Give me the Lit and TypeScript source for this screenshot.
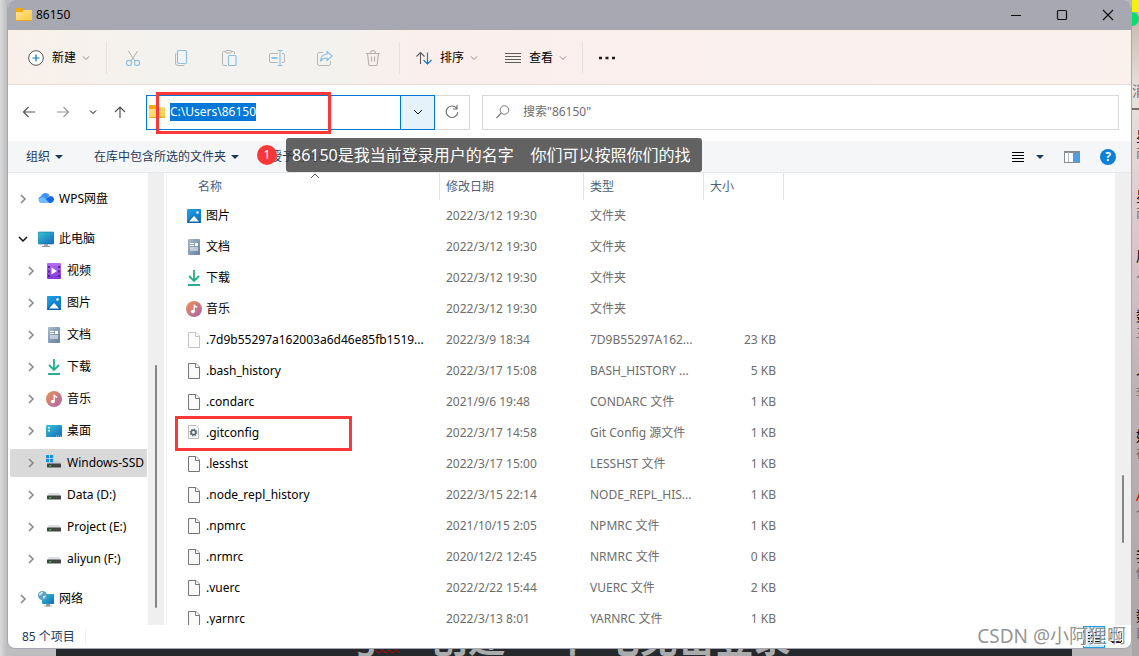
import { LitElement, html, css, svg, nothing } from "lit";
import { customElement, query } from "lit/decorators.js";
import { classMap } from "lit/directives/class-map.js";

type Row = [icon: string, name: string, date: string, type: string, size: string];

const ROWS: Row[] = [
  ["picture", "图片", "2022/3/12 19:30", "文件夹", ""],
  ["doc", "文档", "2022/3/12 19:30", "文件夹", ""],
  ["download", "下载", "2022/3/12 19:30", "文件夹", ""],
  ["music", "音乐", "2022/3/12 19:30", "文件夹", ""],
  ["fileDim", ".7d9b55297a162003a6d46e85fb1519...", "2022/3/9 18:34", "7D9B55297A162...", "23 KB"],
  ["file", ".bash_history", "2022/3/17 15:08", "BASH_HISTORY ...", "5 KB"],
  ["file", ".condarc", "2021/9/6 19:48", "CONDARC 文件", "1 KB"],
  ["config", ".gitconfig", "2022/3/17 14:58", "Git Config 源文件", "1 KB"],
  ["file", ".lesshst", "2022/3/17 15:00", "LESSHST 文件", "1 KB"],
  ["file", ".node_repl_history", "2022/3/15 22:14", "NODE_REPL_HIS...", "1 KB"],
  ["file", ".npmrc", "2021/10/15 2:05", "NPMRC 文件", "1 KB"],
  ["file", ".nrmrc", "2020/12/2 12:45", "NRMRC 文件", "0 KB"],
  ["file", ".vuerc", "2022/2/22 15:44", "VUERC 文件", "2 KB"],
  ["file", ".yarnrc", "2022/3/13 8:01", "YARNRC 文件", "1 KB"],
];

type Node = { icon: string; label: string; child?: boolean; open?: boolean; current?: boolean };

const TREE: Node[][] = [
  [{ icon: "cloud", label: "WPS网盘" }],
  [
    { icon: "pc", label: "此电脑", open: true },
    { icon: "video", label: "视频", child: true },
    { icon: "picture", label: "图片", child: true },
    { icon: "doc", label: "文档", child: true },
    { icon: "download", label: "下载", child: true },
    { icon: "music", label: "音乐", child: true },
    { icon: "desktop", label: "桌面", child: true },
    { icon: "winDrive", label: "Windows-SSD", child: true, current: true },
    { icon: "drive", label: "Data (D:)", child: true },
    { icon: "drive", label: "Project (E:)", child: true },
    { icon: "drive", label: "aliyun (F:)", child: true },
  ],
  [{ icon: "network", label: "网络" }],
];

const CHATS = [
  { name: "星", text: "南" },
  { name: "星", text: "南" },
  { name: "周", text: "人" },
  { name: "数", text: "三" },
  { name: "个", text: "李" },
  { name: "好", text: "在" },
  { name: "A", text: "个", hot: true },
  { name: "我", text: "你" },
  { name: "数", text: "口" },
];

const ART: Record<string, unknown> = {
  folder: svg`<path d="M0 2q0-1 1-1h5l2 2v4H0z" fill="#f2a900"/><path d="M0 13V5h6.500L8 3h7q1 0 1 1v9q0 1-1 1H1q-1 0-1-1z" fill="url(#gf)"/><path d="M0 13q0 1 1 1h14q1 0 1-1z" fill="#eaa620"/>`,
  picture: svg`<rect x="1" y="1" width="14" height="14" rx="1" fill="url(#gb)"/><path d="M1 14l5.500-6q.8-.8 1.600 0L15 14q0 1-1 1H2q-1 0-1-1z" fill="#0866ae"/><path d="M3 13.500l4.400-5q.6-.6 1.200 0l4.400 5z" fill="#fff"/><circle cx="11.500" cy="4.500" r="1.300" fill="#fff"/>`,
  doc: svg`<rect x="2" y="0" width="12" height="16" rx="1" fill="url(#gd)"/><path d="M4 4.500h4M4 6.500h4M4 9h8M4 11h8" stroke="#fff" stroke-width="1.200"/><rect x="9" y="4" width="3" height="3" fill="#fff"/>`,
  download: svg`<path d="M8 0v11M3 6l5 5 5-5" fill="none" stroke="#1eb088" stroke-width="1.800"/><path d="M2 15h12" stroke="#12a48b" stroke-width="1.800"/>`,
  music: svg`<circle cx="8" cy="8" r="8" fill="url(#gm)"/><ellipse cx="6.800" cy="10.600" rx="2" ry="1.800" fill="#fff"/><path d="M8.200 10.500V3.500q.3 2 3 2.800" fill="none" stroke="#fff" stroke-width="1.300"/>`,
  file: svg`<path d="M2.500.5h7.500l3.500 3.500v11.500h-11z" fill="#fafafa" stroke="#767676"/><path d="M9.500.5v4h4" fill="#fff" stroke="#767676"/>`,
  fileDim: svg`<path d="M2.500.5h7.500l3.500 3.500v11.500h-11z" fill="#fdfdfd" stroke="#c2c2c2"/><path d="M9.500.5v4h4" fill="#fff" stroke="#c2c2c2"/>`,
  config: svg`<path d="M2.500.5h7.500l2.500 2.500v10.500h-10z" fill="#fafafa" stroke="#bcbcbc"/><circle cx="7.500" cy="7.500" r="2.200" fill="none" stroke="#53676e" stroke-width="1.600"/><circle cx="7.500" cy="7.500" r="3.300" fill="none" stroke="#53676e" stroke-width="1.200" stroke-dasharray="1.300 1.290"/>`,
  cloud: svg`<g transform="translate(0 -2)"><path d="M3.500 14a3.500 3.500 0 01-.5-6.800A4.800 4.800 0 0111.500 6l-5 8z" fill="#3a95ff"/><path d="M7 11l4-3.500a3.300 3.300 0 014.500 4.500q-.8 2-3 2H9z" fill="#1668e3"/><path d="M3 8.500q2.500-1 4 .8L11.500 14H3a2.800 2.800 0 010-5.500z" fill="#70bcff"/></g>`,
  pc: svg`<rect x="0" y="1" width="16" height="12" rx="1" fill="url(#gp)" stroke="#1c6f94" stroke-width=".6"/><path d="M6 13h4v2H6z" fill="#9aa6b0"/><path d="M4 15.500h8" stroke="#8a97a3"/>`,
  video: svg`<rect x="1" y="0" width="14" height="16" rx="1" fill="url(#gv)"/><path d="M3 3v11M13 3v11" stroke="#4b1d9a" stroke-width="1.800" stroke-dasharray="2 2.500"/><path d="M5.500 4.500L11 8l-5.500 3.500z" fill="#fff"/>`,
  desktop: svg`<rect x="0" y="2" width="16" height="12" rx="1" fill="url(#gp)"/><path d="M3 4v5" stroke="#fff" stroke-width="1.600" stroke-dasharray="1.600 1.200"/><path d="M10 13h5" stroke="#b9e5ff" stroke-dasharray="1 1"/>`,
  drive: svg`<path d="M3 6h10l2 3H1z" fill="#dcdfe1"/><rect x="1" y="8.500" width="14" height="4" rx=".6" fill="#434547"/><rect x="3.500" y="10" width="1.400" height="1.400" fill="#3fe04d"/>`,
  winDrive: svg`<path d="M6 6h8l1 3H2z" fill="#cdd0d2"/><rect x="1" y="8.500" width="14" height="4" rx=".6" fill="#434547"/><rect x="3.500" y="10" width="1.400" height="1.400" fill="#3fe04d"/><path d="M0 0h3.200v3.200H0zM4 0h3.200v3.200H4zM0 4h3.200v3.200H0zM4 4h3.200v3.200H4z" fill="#1593e6"/>`,
  network: svg`<rect x="4" y="3" width="12" height="10" rx=".8" fill="url(#gp)"/><path d="M8.500 13h3v2h-3zM6 15h8" fill="#8a97a3" stroke="#8a97a3" stroke-width=".8"/><circle cx="4.500" cy="4.500" r="4.500" fill="#5f9fc4"/><path d="M1 3q3-3 4-2 0 2-2 3t-2 0M5 5q3-1 3 0t-3 3z" fill="#c9e6f2"/>`,
  plus: svg`<circle cx="8" cy="8" r="7.300" fill="#fdfdfd" stroke="#545454"/><path d="M8 4.500v7M4.500 8h7" stroke="#0a78c8" stroke-width="1.200"/>`,
  cut: svg`<path d="M3.500 1l6.300 10M12.500 1L6.200 11" fill="none" stroke="#b4b0b0"/><circle cx="4" cy="13" r="2.600" fill="none" stroke="#8ec0e4" stroke-width="1.200"/><circle cx="12" cy="13" r="2.600" fill="none" stroke="#8ec0e4" stroke-width="1.200"/>`,
  copy: svg`<path d="M3.500 3Q2.500 3.500 2.500 5v8q0 2.500 2.500 2.500h5q1.500 0 2-1" fill="none" stroke="#b9b6b5"/><rect x="4.500" y=".5" width="9" height="13" rx="1.500" fill="#f1f5f6" stroke="#8ec0e4" stroke-width="1.200"/>`,
  paste: svg`<path d="M5 1.500H2.500q-1 0-1 1v12q0 1 1 1H6M10 1.500h2.500q1 0 1 1V4" fill="none" stroke="#b4b0b0"/><rect x="4.500" y=".5" width="6" height="2.500" rx="1.200" fill="none" stroke="#b4b0b0"/><rect x="7.500" y="5.500" width="7.500" height="10" rx="1" fill="#f3f5f5" stroke="#8ec0e4" stroke-width="1.200"/>`,
  rename: svg`<path d="M9 3.500H2q-1.500 0-1.500 1.500v6q0 1.500 1.500 1.500h7M13 3.500h1q1.500 0 1.500 1.500v6q0 1.500-1.500 1.500h-1" fill="none" stroke="#b9b6b5"/><path d="M2.500 8h6" stroke="#8ec0e4" stroke-width="2"/><path d="M8.500.5h5M8.500 15.500h5M11 .5v15" stroke="#8ec0e4" stroke-width="1.200"/>`,
  share: svg`<path d="M6 2.500H2.500Q.5 2.500.5 4.500v9q0 2 2 2h9q2 0 2-2V11" fill="none" stroke="#b9b6b5"/><path d="M10 1.500l5 4.500-5 4.500V8q-4 0-6.500 3 .5-6.500 6.500-7z" fill="none" stroke="#8ec0e4" stroke-width="1.200" stroke-linejoin="round"/>`,
  trash: svg`<path d="M1 3.500h14M5.500 3Q5.500.5 8 .5T10.500 3M2.500 3.500l1.300 11q.1 1 1.200 1h6q1.100 0 1.200-1l1.300-11M6.500 6.500v5M9.500 6.500v5" fill="none" stroke="#b4b0b0" stroke-width="1.100"/>`,
  sort: svg`<path d="M4.500 14V2.500M.5 6.500l4-4 4 4" fill="none" stroke="#5c5c5c" stroke-width="1.100"/><path d="M11.500 2.500v11.500M7.500 10l4 4 4-4" fill="none" stroke="#0a78d4" stroke-width="1.100"/>`,
  lines: svg`<path d="M0 3.500h16M0 6.500h16M0 9.500h16M0 12.500h16" stroke="#5c5c5c"/>`,
  dots: svg`<path d="M0 8h3M6.500 8h3M13 8h3" stroke="#1c1c1c" stroke-width="2.400"/>`,
  back: svg`<path d="M14 8H2.500M7.500 3L2.500 8l5 5" fill="none" stroke="#555" stroke-width="1.200"/>`,
  forward: svg`<path d="M2 8h11.500M8.500 3l5 5-5 5" fill="none" stroke="#959595" stroke-width="1.200"/>`,
  up: svg`<path d="M8 14V3M3 8l5-5 5 5" fill="none" stroke="#555" stroke-width="1.200"/>`,
  refresh: svg`<path d="M12.600 4.200A5.800 5.800 0 1013.800 8M13 1v4H9" fill="none" stroke="#6e6e6e" stroke-width="1.100"/>`,
  search: svg`<circle cx="9.500" cy="6" r="4.300" fill="none" stroke="#777"/><path d="M6.300 9L1.500 14" stroke="#777" stroke-width="1.100"/>`,
  list: svg`<path d="M2 3.500h12M2 6.500h12M2 9.500h12M2 12.500h12" stroke="#000"/>`,
  pane: svg`<rect x=".5" y="2.500" width="15" height="11" fill="#fff" stroke="#848b91"/><path d="M1 3h14" stroke="#848b91" stroke-width="2"/><path d="M4.500 3v10" stroke="#b7babd"/><rect x="9" y="4" width="6" height="9" fill="#4c9fe3"/>`,
  min: svg`<path d="M3 8.500h10" stroke="#111"/>`,
  max: svg`<rect x="3.500" y="3.500" width="9" height="9" rx="1" fill="none" stroke="#111" stroke-width="1.200"/>`,
  close: svg`<path d="M3 3l10 10M13 3L3 13" stroke="#111" stroke-width="1.200"/>`,
  details: svg`<path d="M2 3.500h2M5 3.500h9M2 6.500h2M5 6.500h9M2 9.500h2M5 9.500h9M2 12.500h2M5 12.500h9" stroke="#222"/>`,
  tiles: svg`<rect x="2.500" y="3.500" width="11" height="9" fill="none" stroke="#222"/><path d="M4 13.500h9" stroke="#222"/>`,
};

const icon = (name: string) => html`<svg class="icon" viewBox="0 0 16 16" width="16" height="16" aria-hidden="true">
  <defs>
    <linearGradient id="gf" x1="0" y1="0" x2="1" y2="1"><stop stop-color="#ffe394" /><stop offset="1" stop-color="#ffc83c" /></linearGradient>
    <linearGradient id="gb" x1="0" y1="0" x2="1" y2="1"><stop stop-color="#1ea0e6" /><stop offset="1" stop-color="#0a70c0" /></linearGradient>
    <linearGradient id="gd" x1="0" y1="0" x2="1" y2="1"><stop stop-color="#a9bbce" /><stop offset="1" stop-color="#64809f" /></linearGradient>
    <linearGradient id="gm" x1="0" y1="0" x2="1" y2="1"><stop stop-color="#f0934f" /><stop offset="1" stop-color="#a862b0" /></linearGradient>
    <linearGradient id="gp" x1="0" y1="0" x2="1" y2="1"><stop stop-color="#36c5d8" /><stop offset="1" stop-color="#1667b8" /></linearGradient>
    <linearGradient id="gv" x1="0" y1="0" x2="0" y2="1"><stop stop-color="#b66cf0" /><stop offset="1" stop-color="#7e38dc" /></linearGradient>
  </defs>
  ${ART[name]}
</svg>`;

const chevron = (dir: "down" | "right" | "up" | "wide") => {
  const d = { down: "M2 3.500l3 3 3-3", wide: "M1 3l4 4 4-4", right: "M3 1l4 4-4 4", up: "M1 7l4-4 4 4" }[dir];
  return html`<svg class="chev" viewBox="0 0 10 10" width="10" height="10" aria-hidden="true">
    <path d=${d} fill="none" stroke="currentColor" />
  </svg>`;
};

const caret = () => html`<svg width="8" height="4" viewBox="0 0 8 4" aria-hidden="true"><path d="M0 0h8L4 4z" fill="#1e395b" /></svg>`;

@customElement("app-root")
export class AppRoot extends LitElement {
  @query(".path") private path!: HTMLInputElement;

  static styles = css`
    :host {
      display: grid;
      grid-template-columns: 7px minmax(0, 1fr) 7px;
      grid-template-rows: minmax(0, 1fr) 7px;
      height: 100vh;
      overflow: hidden;
      font-family: "Noto Sans", "Noto Sans CJK SC", sans-serif;
      font-size: 12px;
      line-height: 16px;
      color: #000;
      background: linear-gradient(90deg, #dadada, #bdbdc0 7px, #b9b5b7);
    }
    * { box-sizing: border-box; }
    button {
      font: inherit;
      color: inherit;
      background: none;
      border: 0;
      padding: 0;
      display: flex;
      align-items: center;
      white-space: nowrap;
    }
    input {
      font: inherit;
      border: 0;
      padding: 0;
      outline: 0;
      min-width: 0;
      background: transparent;
    }
    .icon, .chev { flex: none; display: block; }
    .window {
      grid-column: 2;
      grid-row: 1;
      display: flex;
      flex-direction: column;
      min-height: 0;
      background: #fff;
      border: 1px solid #a7a7b1;
      border-top: 0;
      border-radius: 8px;
      overflow: hidden;
    }
    .title {
      flex: none;
      display: flex;
      align-items: center;
      height: 30px;
      padding-left: 8px;
      background: #a8a8b2;
    }
    .title h1 { flex: 1; margin: 0 0 0 4px; font-size: 12px; line-height: 16px; font-weight: 400; }
    .title button { width: 46px; height: 30px; justify-content: center; }
    .commands {
      flex: none;
      display: flex;
      align-items: center;
      height: 55px;
      padding: 2px 17px 0 20px;
      background: linear-gradient(90deg, #f9f0ea, #f4f2ee 12%, #f4f2ee 30%, #faefec 36%, #faf0ec);
      border-bottom: 1px solid #e8dcd8;
    }
    .labelled { gap: 8px; }
    .labelled .chev { margin-left: -3px; color: #8a8a8a; }
    .new { width: 78px; }
    .tool { width: 48px; justify-content: center; }
    .menu { width: 89px; }
    .rule { width: 1px; height: 32px; background: #e8e2df; }
    .tools { display: flex; padding: 0 2px; }
    .menus { display: flex; padding-left: 16px; width: 182px; }
    .more { padding-left: 16px; }
    .address {
      flex: none;
      display: flex;
      align-items: center;
      height: 56px;
      padding: 0 12px 2px 13px;
    }
    .nav { display: flex; align-items: center; width: 125px; }
    .nav button { width: 35px; }
    .nav .recent { width: 25px; }
    .box { display: flex; height: 35px; border: 1px solid #d9d9d9; }
    .location { position: relative; width: 324px; }
    .entry {
      display: flex;
      align-items: center;
      flex: 1;
      margin: -1px 0;
      margin-left: -1px;
      padding-left: 2px;
      border: 1px solid #0078d4;
      gap: 5px;
      min-width: 0;
    }
    .path { flex: 1; line-height: 18px; height: 18px; }
    .path::selection { background: #0078d7; color: #fff; }
    .drop { width: 35px; margin: -1px 0; margin-left: -1px; justify-content: center; background: #e5f1fb; border: 1px solid #0078d4; }
    .refresh { width: 34px; justify-content: center; }
    .search { flex: 1; align-items: center; margin-left: 12px; padding-left: 12px; gap: 12px; }
    .search input { flex: 1; }
    .search input::placeholder { color: #6d6d6d; opacity: 1; }
    .frame { position: absolute; border: 3px solid #fb3838; pointer-events: none; }
    .frame-path { left: 9px; top: -4px; width: 175px; height: 42px; }
    .frame-row { left: 8px; top: -1px; width: 177px; height: 35px; }
    .band {
      position: relative;
      flex: none;
      display: flex;
      align-items: center;
      height: 32px;
      padding: 0 15px 0 18px;
      gap: 31px;
      color: #1e395b;
      background: #f4f6f8;
      border-bottom: 1px solid #e6e8ea;
    }
    .band button { gap: 5px; }
    .spacer { flex: 1; }
    .layout { display: flex; gap: 20px; align-items: center; }
    .layout .views { gap: 10px; }
    .layout .help {
      width: 16px;
      height: 16px;
      border-radius: 50%;
      background: #0a80d8;
      color: #fff;
      font-weight: 700;
      justify-content: center;
    }
    .badge {
      position: absolute;
      left: 249px;
      top: 4px;
      width: 20px;
      height: 20px;
      border-radius: 50%;
      background: #fb3838;
      color: #fff;
      line-height: 20px;
      text-align: center;
    }
    .note {
      position: absolute;
      left: 278px;
      top: -3px;
      width: 416px;
      height: 34px;
      padding-left: 6px;
      border-radius: 3px;
      background: rgba(61, 61, 61, 0.8);
      color: #fff;
      font-size: 16px;
      line-height: 34px;
      white-space: pre;
    }
    .body { flex: 1; display: flex; min-height: 0; }
    .tree {
      flex: none;
      width: 140px;
      overflow: hidden;
      padding: 10px 1px 0 2px;
      display: flex;
      flex-direction: column;
      gap: 8px;
    }
    .tree ul { margin: 0; padding: 0; list-style: none; }
    .tree li { padding: 2px 0; }
    .tree button { width: 100%; height: 28px; padding-left: 8px; overflow: hidden; }
    .tree .icon { margin: 0 5px 0 10px; }
    .tree .chev { color: #858585; stroke-width: 1.5px; }
    .tree .open .chev { color: #111; }
    .tree .child { padding-left: 16px; }
    .tree .current { background: #d9d9d9; border-radius: 2px 0 0 2px; }
    .track { flex: none; width: 16px; background: #efefef; display: flex; flex-direction: column; align-items: center; }
    .thumb { width: 2px; background: #858585; border-radius: 1px; }
    .track-tree { padding-top: 192px; }
    .track-tree .thumb { height: 243px; }
    .track-files { padding-top: 302px; }
    .track-files .thumb { height: 68px; }
    .files { flex: 1; min-width: 0; margin-left: 2px; border-left: 1px solid #f2f2f2; overflow: hidden; }
    table { table-layout: fixed; width: 617px; border-collapse: separate; border-spacing: 0; }
    .c-name { width: 273px; }
    .c-date { width: 144px; }
    .c-type { width: 120px; }
    .c-size { width: 80px; }
    th {
      position: relative;
      height: 27px;
      padding: 0 6px;
      border-right: 1px solid #e2e2e2;
      color: #4c607a;
      font-weight: 400;
      text-align: left;
    }
    th:first-child { padding-left: 31px; }
    th .chev { position: absolute; left: 143px; top: -2px; color: #555; }
    td { height: 31px; padding: 0 6px; color: #6d6d6d; white-space: nowrap; }
    td:first-child { position: relative; padding: 0 0 0 19px; color: #000; }
    td:last-child { padding-right: 8px; text-align: right; }
    .name { display: flex; align-items: center; gap: 4px; }
    .status {
      flex: none;
      display: flex;
      align-items: center;
      justify-content: space-between;
      height: 23px;
      padding: 0 4px 0 14px;
      color: #1e395b;
      position: relative;
    }
    .count { padding-right: 10px; border-right: 1px solid #eee; }
    .modes { display: flex; }
    .modes button { width: 22px; height: 22px; justify-content: center; }
    .modes .on { background: #cce8f8; border: 1px solid #26a0da; }
    .mark {
      position: absolute;
      right: 5px;
      top: 0;
      color: rgba(120, 120, 120, 0.8);
      font-size: 19px;
      line-height: 23px;
      text-shadow: 1px 1px 0 #fff;
    }
    .chats {
      grid-column: 3;
      grid-row: 1 / 3;
      display: flex;
      flex-direction: column;
      overflow: hidden;
      background: linear-gradient(#c0b0a5, #e6e3dc 14%, #d7c5cc 38%, #b9b3b5 60%, #aba6a8);
    }
    .sun { flex: none; height: 12px; background: #f2f20a; }
    .leaf { flex: none; width: 7px; height: 14px; border-radius: 0 7px 7px 0; background: #08df6b; }
    .tab {
      flex: none;
      height: 64px;
      margin-top: 20px;
      padding-top: 37px;
      color: #7b6d6d;
      border-bottom: 2px solid #7b6d6d;
      font-size: 14px;
      overflow: hidden;
    }
    .chat { flex: none; height: 60px; padding: 16px 0 0 4px; white-space: nowrap; }
    .chat b { display: block; font-weight: 400; font-size: 14px; line-height: 20px; }
    .chat small { display: block; font-size: 12px; line-height: 16px; color: #666; }
    .chat .hot { color: #f00; }
    .page {
      grid-column: 2;
      grid-row: 2;
      margin: 0 60px 0 49px;
      background: #25292c;
      overflow: hidden;
      display: flex;
      align-items: flex-end;
      padding-left: 300px;
      color: #a9abac;
      font-size: 38px;
      font-weight: 700;
      line-height: 38px;
      white-space: pre;
    }
    .page u { text-decoration: underline wavy #c00 1px; text-underline-offset: 0; padding-right: 30px; font-size: 32px; }
  `;

  firstUpdated() {
    this.path.focus();
    this.path.select();
  }

  private treeItem(n: Node) {
    return html`<li>
      <button class=${classMap({ child: !!n.child, open: !!n.open, current: !!n.current })}>
        ${chevron(n.open ? "wide" : "right")}${icon(n.icon)}<span>${n.label}</span>
      </button>
    </li>`;
  }

  render() {
    return html`
      <main class="window">
        <header class="title">
          ${icon("folder")}
          <h1>86150</h1>
          <button aria-label="最小化">${icon("min")}</button>
          <button aria-label="最大化">${icon("max")}</button>
          <button aria-label="关闭">${icon("close")}</button>
        </header>
        <div class="commands">
          <button class="labelled new">${icon("plus")}<span>新建</span>${chevron("down")}</button>
          <i class="rule"></i>
          <div class="tools">
            ${[["cut", "剪切"], ["copy", "复制"], ["paste", "粘贴"], ["rename", "重命名"], ["share", "共享"], ["trash", "删除"]].map(
              ([i, l]) => html`<button class="tool" aria-label=${l}>${icon(i)}</button>`
            )}
          </div>
          <i class="rule"></i>
          <div class="menus">
            <button class="labelled menu">${icon("sort")}<span>排序</span>${chevron("down")}</button>
            <button class="labelled">${icon("lines")}<span>查看</span>${chevron("down")}</button>
          </div>
          <i class="rule"></i>
          <button class="more" aria-label="更多">${icon("dots")}</button>
        </div>
        <div class="address">
          <nav class="nav">
            <button aria-label="后退">${icon("back")}</button>
            <button aria-label="前进">${icon("forward")}</button>
            <button class="recent" aria-label="最近">${chevron("down")}</button>
            <button aria-label="上移">${icon("up")}</button>
          </nav>
          <div class="box location">
            <div class="entry">
              ${icon("folder")}
              <input class="path" aria-label="地址" .value=${"C:\\Users\\86150"} />
            </div>
            <button class="drop" aria-label="历史">${chevron("wide")}</button>
            <button class="refresh" aria-label="刷新">${icon("refresh")}</button>
            <div class="frame frame-path"></div>
          </div>
          <label class="box search">
            ${icon("search")}
            <input aria-label="搜索" placeholder='搜索"86150"' />
          </label>
        </div>
        <div class="band">
          <button>组织${caret()}</button>
          <button>在库中包含所选的文件夹${caret()}</button>
          <button>授予访问权限${caret()}</button>
          <button>新建文件夹</button>
          <span class="spacer"></span>
          <div class="layout">
            <button class="views" aria-label="更改视图">${icon("list")}${caret()}</button>
            <button aria-label="预览窗格">${icon("pane")}</button>
            <button class="help">?</button>
          </div>
          <span class="badge">1</span>
          <div class="note">86150是我当前登录用户的名字    你们可以按照你们的找</div>
        </div>
        <div class="body">
          <nav class="tree">${TREE.map((g) => html`<ul>${g.map((n) => this.treeItem(n))}</ul>`)}</nav>
          <div class="track track-tree"><div class="thumb"></div></div>
          <section class="files">
            <table>
              <colgroup>
                <col class="c-name" /><col class="c-date" /><col class="c-type" /><col class="c-size" />
              </colgroup>
              <thead>
                <tr><th>名称${chevron("up")}</th><th>修改日期</th><th>类型</th><th>大小</th></tr>
              </thead>
              <tbody>
                ${ROWS.map(
                  ([i, name, date, type, size]) => html`<tr>
                    <td>
                      <div class="name">${icon(i)}<span>${name}</span></div>
                      ${i === "config" ? html`<div class="frame frame-row"></div>` : nothing}
                    </td>
                    <td>${date}</td>
                    <td>${type}</td>
                    <td>${size}</td>
                  </tr>`
                )}
              </tbody>
            </table>
          </section>
          <div class="track track-files"><div class="thumb"></div></div>
        </div>
        <footer class="status">
          <span class="count">85 个项目</span>
          <div class="modes">
            <button class="on" aria-label="详细信息">${icon("details")}</button>
            <button aria-label="大图标">${icon("tiles")}</button>
          </div>
          <span class="mark">CSDN @小阿狸啊</span>
        </footer>
      </main>
      <aside class="chats">
        <div class="sun"></div>
        <div class="leaf"></div>
        <div class="tab">消</div>
        ${CHATS.map((c) => html`<div class="chat"><b class=${classMap({ hot: !!c.hot })}>${c.name}</b><small>${c.text}</small></div>`)}
      </aside>
      <div class="page"><u>git</u>创建 一个 电免密登录</div>
    `;
  }
}
